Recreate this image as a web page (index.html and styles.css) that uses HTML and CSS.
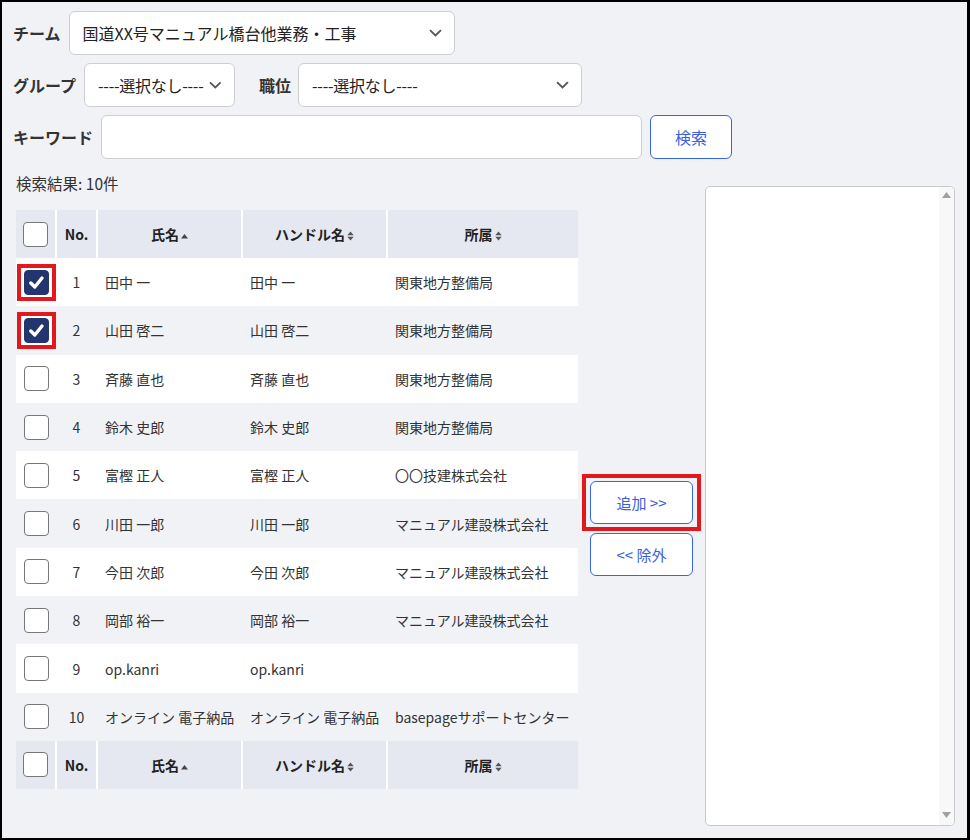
FILE: index.html
```html
<!DOCTYPE html>
<html lang="ja">
<head>
    <meta charset="UTF-8">
    <title>メンバー選択</title>
    <link rel="stylesheet" href="styles.css">
</head>
<body>
    <div class="frame">
        <div class="filters">
            <div class="filter-row">
                <span class="filter-label">チーム</span>
                <div class="select select-team">
                    <span>国道XX号マニュアル橋台他業務・工事</span>
                    <svg class="chevron" width="13" height="8" viewBox="0 0 13 8"><path d="M1 1.2 L6.5 6.5 L12 1.2" fill="none" stroke="#555" stroke-width="1.8"/></svg>
                </div>
            </div>
            <div class="filter-row">
                <span class="filter-label">グループ</span>
                <div class="select select-group">
                    <span class="dashed">----選択なし----</span>
                    <svg class="chevron" width="13" height="8" viewBox="0 0 13 8"><path d="M1 1.2 L6.5 6.5 L12 1.2" fill="none" stroke="#555" stroke-width="1.8"/></svg>
                </div>
                <span class="filter-label label-position">職位</span>
                <div class="select select-position">
                    <span class="dashed">----選択なし----</span>
                    <svg class="chevron" width="13" height="8" viewBox="0 0 13 8"><path d="M1 1.2 L6.5 6.5 L12 1.2" fill="none" stroke="#555" stroke-width="1.8"/></svg>
                </div>
            </div>
            <div class="filter-row">
                <span class="filter-label">キーワード</span>
                <div class="keyword-input"></div>
                <button class="btn btn-search">検索</button>
            </div>
        </div>

        <div class="picker">
            <div class="results">
                <div class="result-count">検索結果: 10件</div>
                <table class="member-table">
                    <colgroup>
                        <col class="col-check">
                        <col class="col-no">
                        <col class="col-name">
                        <col class="col-handle">
                        <col class="col-org">
                    </colgroup>
                    <thead>
                        <tr>
                            <th><span class="cb"></span></th>
                            <th>No.</th>
                            <th>氏名<svg class="sort" width="7" height="10" viewBox="0 0 7 10"><path d="M0 7.5 L3.5 3 L7 7.5 Z" fill="#444"/></svg></th>
                            <th>ハンドル名<svg class="sort" width="7" height="10" viewBox="0 0 7 10"><path d="M0.3 4.3 L3.5 0.5 L6.7 4.3 Z M0.3 5.7 L6.7 5.7 L3.5 9.5 Z" fill="#555"/></svg></th>
                            <th>所属<svg class="sort" width="7" height="10" viewBox="0 0 7 10"><path d="M0.3 4.3 L3.5 0.5 L6.7 4.3 Z M0.3 5.7 L6.7 5.7 L3.5 9.5 Z" fill="#555"/></svg></th>
                        </tr>
                    </thead>
                    <tbody id="memberRows"></tbody>
                    <tfoot>
                        <tr>
                            <th><span class="cb"></span></th>
                            <th>No.</th>
                            <th>氏名<svg class="sort" width="7" height="10" viewBox="0 0 7 10"><path d="M0 7.5 L3.5 3 L7 7.5 Z" fill="#444"/></svg></th>
                            <th>ハンドル名<svg class="sort" width="7" height="10" viewBox="0 0 7 10"><path d="M0.3 4.3 L3.5 0.5 L6.7 4.3 Z M0.3 5.7 L6.7 5.7 L3.5 9.5 Z" fill="#555"/></svg></th>
                            <th>所属<svg class="sort" width="7" height="10" viewBox="0 0 7 10"><path d="M0.3 4.3 L3.5 0.5 L6.7 4.3 Z M0.3 5.7 L6.7 5.7 L3.5 9.5 Z" fill="#555"/></svg></th>
                        </tr>
                    </tfoot>
                </table>
            </div>

            <div class="actions">
                <div class="mark mark-button">
                    <button class="btn btn-move">追加 &gt;&gt;</button>
                </div>
                <button class="btn btn-move">&lt;&lt; 除外</button>
            </div>

            <div class="selected-list">
                <div class="scrollbar">
                    <svg width="9" height="6" viewBox="0 0 9 6"><path d="M0 6 L4.5 0 L9 6 Z" fill="#a0a0a0"/></svg>
                    <svg width="9" height="6" viewBox="0 0 9 6"><path d="M0 0 L9 0 L4.5 6 Z" fill="#a0a0a0"/></svg>
                </div>
            </div>
        </div>
    </div>

    <script>
        const members = [
            [1, '田中 一', '田中 一', '関東地方整備局', true],
            [2, '山田 啓二', '山田 啓二', '関東地方整備局', true],
            [3, '斉藤 直也', '斉藤 直也', '関東地方整備局', false],
            [4, '鈴木 史郎', '鈴木 史郎', '関東地方整備局', false],
            [5, '富樫 正人', '富樫 正人', '〇〇技建株式会社', false],
            [6, '川田 一郎', '川田 一郎', 'マニュアル建設株式会社', false],
            [7, '今田 次郎', '今田 次郎', 'マニュアル建設株式会社', false],
            [8, '岡部 裕一', '岡部 裕一', 'マニュアル建設株式会社', false],
            [9, 'op.kanri', 'op.kanri', '', false],
            [10, 'オンライン 電子納品', 'オンライン 電子納品', 'basepageサポートセンター', false]
        ];

        const check = '<svg width="25" height="25" viewBox="0 0 25 25"><path d="M6.8 13 L10.8 17 L18 8" fill="none" stroke="#fff" stroke-width="3.4" stroke-linecap="round" stroke-linejoin="round"/></svg>';

        const rows = document.getElementById('memberRows');
        members.forEach(([no, name, handle, org, checked]) => {
            const tr = document.createElement('tr');
            const box = checked
                ? `<span class="mark mark-check"><span class="cb checked">${check}</span></span>`
                : '<span class="cb"></span>';
            tr.innerHTML = `<td class="cell-check">${box}</td><td class="cell-no">${no}</td><td>${name}</td><td>${handle}</td><td>${org}</td>`;
            rows.appendChild(tr);
        });
    </script>
</body>
</html>
```

FILE: styles.css
```css
* {
    margin: 0;
    padding: 0;
    box-sizing: border-box;
}

body {
    font-family: "Noto Sans CJK JP", "Noto Sans", sans-serif;
    color: #222;
    background: #000;
}

.frame {
    width: 970px;
    height: 840px;
    border: 2px solid #000;
    border-right-width: 3px;
    background: #f1f2f6;
    overflow: hidden;
}

/* filters */
.filters {
    padding: 9px 11px 0;
    display: flex;
    flex-direction: column;
    gap: 8px;
}

.filter-row {
    display: flex;
    align-items: center;
    height: 44px;
}

.filter-label {
    font-size: 16px;
    font-weight: bold;
    color: #333;
    margin-right: 8px;
    white-space: nowrap;
}

.label-position {
    margin-left: 24px;
    margin-right: 7px;
}

.select {
    height: 44px;
    background: #fff;
    border: 1px solid #cfcfcf;
    border-radius: 6px;
    display: flex;
    align-items: center;
    justify-content: space-between;
    gap: 6px;
    padding: 0 12px 0 13px;
    font-size: 16px;
    color: #222;
    white-space: nowrap;
}

.select .dashed {
    letter-spacing: -0.25px;
}

.select-team {
    width: 386px;
}

.select-group {
    width: 151px;
}

.select-position {
    width: 284px;
}

.keyword-input {
    width: 541px;
    height: 44px;
    background: #fff;
    border: 1px solid #cfcfcf;
    border-radius: 6px;
}

.btn {
    font-family: inherit;
    background: #fff;
    color: #3a5fe0;
    border: 1px solid #3565ea;
    border-radius: 6px;
    font-size: 15px;
    cursor: pointer;
}

.btn-search {
    width: 82px;
    height: 44px;
    margin-left: 8px;
    font-size: 16px;
}

/* picker */
.picker {
    display: flex;
    align-items: flex-start;
    margin-top: 10px;
    padding-left: 14px;
}

.result-count {
    font-size: 15.5px;
    line-height: 20px;
    padding-top: 4px;
    color: #333;
}

.member-table {
    margin-top: 17px;
    width: 562px;
    table-layout: fixed;
    border-collapse: collapse;
    font-size: 14px;
    color: #333;
}

.col-check { width: 40px; }
.col-no { width: 41px; }
.col-name { width: 145px; }
.col-handle { width: 145px; }
.col-org { width: 191px; }

.member-table th {
    height: 48px;
    background: #e5e8f0;
    font-weight: bold;
    color: #222;
    text-align: center;
    border-right: 2px solid #fff;
    white-space: nowrap;
}

.member-table th:last-child {
    border-right: none;
}

.member-table td {
    height: 48.3px;
    padding: 0 8px;
    white-space: nowrap;
    overflow: hidden;
}

.member-table tbody tr:nth-child(odd) {
    background: #fff;
}

.member-table td.cell-check,
.member-table td.cell-no {
    padding: 0;
    text-align: center;
}

.sort {
    margin-left: 2px;
    vertical-align: -1px;
}

.cb {
    display: inline-block;
    width: 25px;
    height: 25px;
    border: 1px solid #777;
    border-radius: 4px;
    background: #fff;
    vertical-align: middle;
}

.cb.checked {
    background: #22356f;
    border-color: #22356f;
}

.cb svg {
    display: block;
    margin: -1px 0 0 -1px;
}

/* red annotation boxes */
.mark {
    display: inline-block;
    border: 4px solid #e3181e;
}

.mark-check {
    padding: 2px 3px;
    background: #fff;
    vertical-align: middle;
}

.mark-check .cb {
    display: block;
}

.mark-button {
    display: block;
    padding: 3px 4px;
    margin: -7px -8px -7px;
}

.mark-button .btn-move {
    display: block;
    width: 103px;
}

.actions {
    display: flex;
    flex-direction: column;
    gap: 9px;
    width: 103px;
    margin: 312px 12px 0;
}

.btn-move {
    height: 43px;
}

.selected-list {
    width: 250px;
    height: 640px;
    margin-top: 17px;
    background: #fff;
    border: 1px solid #c9c9c9;
    border-radius: 5px;
    display: flex;
    justify-content: flex-end;
    overflow: hidden;
}

.scrollbar {
    width: 15px;
    background: #f8f8f8;
    display: flex;
    flex-direction: column;
    justify-content: space-between;
    align-items: center;
    padding: 5px 0 7px;
}
```
